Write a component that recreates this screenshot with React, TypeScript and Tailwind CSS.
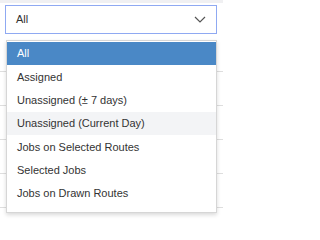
import React from "react";

const options = [
  "All",
  "Assigned",
  "Unassigned (± 7 days)",
  "Unassigned (Current Day)",
  "Jobs on Selected Routes",
  "Selected Jobs",
  "Jobs on Drawn Routes",
];

export default function App() {
  const selected = 0;
  const hovered = 3;

  return (
    <div
      className="relative w-[223px] h-[220px] overflow-hidden bg-white text-[#333]"
      style={{ fontFamily: '"Liberation Sans", Arial, sans-serif' }}
    >
      <div className="h-[3px] bg-[#f0f0f2]" />
      <div className="px-[5px] pt-[2px]">
        <button className="flex w-[212px] h-[29px] items-center justify-between border border-[#8fa9f2] bg-white pl-[10px] pr-[10px] text-[11px]">
          <span>All</span>
          <svg width="12" height="7" viewBox="0 0 12 7" fill="none">
            <path d="M1 1l5 5 5-5" stroke="#555" strokeWidth="1.2" />
          </svg>
        </button>
      </div>

      {/* table rows behind the open menu */}
      <div className="mt-[4px]">
        {[0, 1, 2, 3, 4, 5].map((i) => (
          <div key={i} className="h-[34px] border-b border-[#dedede]" />
        ))}
      </div>

      <ul className="absolute left-[6px] top-[40px] w-[211px] h-[173px] border border-[#d6d6d6] bg-white pt-[1px] text-[11px] shadow-[0_2px_4px_rgba(0,0,0,0.15)]">
        {options.map((o, i) => (
          <li
            key={o}
            className={
              i === selected
                ? "flex h-[23.3px] items-center pl-[10px] bg-[#4a88c6] text-white"
                : i === hovered
                  ? "flex h-[23.3px] items-center pl-[10px] bg-[#f3f4f6]"
                  : "flex h-[23.3px] items-center pl-[10px]"
            }
          >
            {o}
          </li>
        ))}
      </ul>
    </div>
  );
}
